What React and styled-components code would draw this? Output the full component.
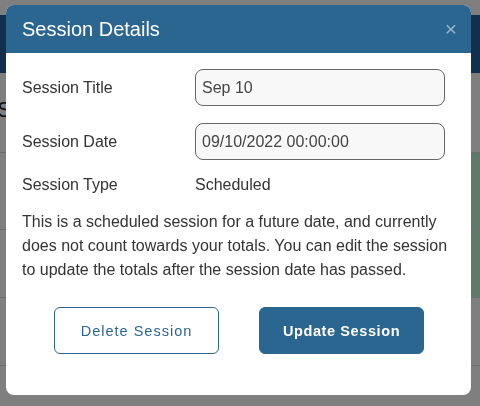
import styled, { createGlobalStyle } from 'styled-components';

const GlobalStyle = createGlobalStyle`
  * { box-sizing: border-box; }
  body {
    margin: 0;
    font-family: "Liberation Sans", Arial, sans-serif;
    background: #fff;
    overflow: hidden;
  }
`;

export default function App() {
  return (
    <>
      <GlobalStyle />
      <Page>
        <TopBand />
        <PageTitle>Sessions</PageTitle>
        <TableRow $height={77} $green />
        <TableRow $height={68} $green />
        <TableRow $height={68} />
      </Page>
      <Overlay />
      <Modal>
        <Header>
          <Title>Session Details</Title>
          <Close aria-label='close'>×</Close>
        </Header>
        <Body>
          <FieldRow>
            <Label>Session Title</Label>
            <Input defaultValue='Sep 10' />
          </FieldRow>
          <FieldRow $top={17}>
            <Label>Session Date</Label>
            <Input defaultValue='09/10/2022 00:00:00' />
          </FieldRow>
          <FieldRow $top={13}>
            <Label>Session Type</Label>
            <Value>Scheduled</Value>
          </FieldRow>
          <Note>
            This is a scheduled session for a future date, and currently
            does not count towards your totals. You can edit the session
            to update the totals after the session date has passed.
          </Note>
          <Buttons>
            <Button>Delete Session</Button>
            <Button $primary>Update Session</Button>
          </Buttons>
        </Body>
      </Modal>
    </>
  );
};

const Page = styled.div`
  height: 406px;
  padding-top: 15px;
`;

const TopBand = styled.div`
  height: 58px;
  background-color: #25619a;
`;

const PageTitle = styled.div`
  height: 80px;
  padding-top: 24px;
  margin-left: -3px;
  font-size: 22px;
  color: #222;
  border-bottom: 1px solid #dcdcdc;
`;

const TableRow = styled.div`
  height: ${props => props.$height}px;
  border-bottom: 1px solid #dcdcdc;
  background: ${props => props.$green ? 'linear-gradient(to right, #fff 471px, #bef4d6 471px)' : '#fff'};
`;

const Overlay = styled.div`
  position: fixed;
  inset: 0;
  background: rgba(0, 0, 0, 0.5);
`;

const Modal = styled.div`
  position: fixed;
  top: 5px;
  left: 6px;
  width: 465px;
  height: 390px;
  background: #fff;
  border-radius: 8px;
  overflow: hidden;
`;

const Header = styled.div`
  height: 48px;
  background-color: #2b6690;
  display: flex;
  align-items: center;
  justify-content: space-between;
  padding: 0 14px 0 16px;
`;

const Title = styled.div`
  color: white;
  font-size: 20px;
`;

const Close = styled.div`
  color: rgba(255, 255, 255, 0.5);
  font-size: 21px;
  line-height: 1;
  margin-top: -1px;
`;

const Body = styled.div`
  padding: 16px 12px 0 16px;
`;

const FieldRow = styled.div`
  display: grid;
  grid-template-columns: 173px 250px;
  align-items: center;
  margin-top: ${props => props.$top || 0}px;
  min-height: 24px;
`;

const Label = styled.div`
  font-size: 16px;
  color: #333;
`;

const Value = styled.div`
  font-size: 16px;
  color: #333;
  line-height: 24px;
`;

const Input = styled.input`
  height: 37px;
  width: 250px;
  border: 1px solid #666;
  border-radius: 8px;
  background: #f8f8f8;
  padding: 0 6px;
  font-family: "Liberation Sans", Arial, sans-serif;
  font-size: 16px;
  color: #444;
  outline: none;
`;

const Note = styled.p`
  margin: 13px 0 0 0;
  font-size: 16px;
  line-height: 24px;
  color: #333;
`;

const Buttons = styled.div`
  display: flex;
  gap: 40px;
  margin-top: 25px;
  padding-left: 32px;
`;

const Button = styled.button`
  width: 165px;
  height: 47px;
  border-radius: 6px;
  border: 1px solid #2b6690;
  background-color: ${props => props.$primary ? '#2b6690' : '#fff'};
  color: ${props => props.$primary ? '#fff' : '#2b6690'};
  font-family: "Liberation Sans", Arial, sans-serif;
  font-size: 14.5px;
  font-weight: ${props => props.$primary ? 'bold' : 'normal'};
  letter-spacing: ${props => props.$primary ? '0.6px' : '1px'};
`;
